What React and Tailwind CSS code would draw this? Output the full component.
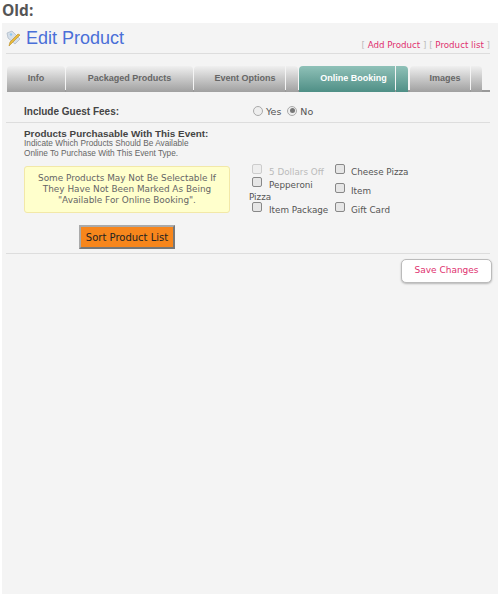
const sans = "font-['Liberation_Sans',Arial,sans-serif]";
const verdana = "font-['DejaVu_Sans',Verdana,sans-serif]";

function Tab({ label, w, ext, active, pad }) {
  const bg = active
    ? "bg-gradient-to-b from-[#8fc1b8] to-[#4f8f86] text-white"
    : "bg-gradient-to-b from-[#f0f0f0] to-[#a0a0a0] text-[#666]";
  return (
    <div className="flex h-[26px]">
      <div className={`${bg} ${w} ${pad || ""} rounded-tl-[4px] ${ext ? "" : "rounded-tr-[4px]"} flex items-center justify-center text-[9px] font-bold whitespace-nowrap`}>
        {label}
      </div>
      {ext && <div className={`${bg} ${ext} ml-px rounded-tr-[4px]`} />}
    </div>
  );
}

function Box({ disabled }) {
  return (
    <span className={`inline-block w-[10px] h-[10px] rounded-[2px] border shrink-0 ${disabled ? "border-[#ccc] bg-[#eee]" : "border-[#888] bg-[#e6e6e6]"}`} />
  );
}

function Check({ label, disabled, h, gap }) {
  return (
    <div className={`flex items-start ${gap || "gap-[6px]"} ${h} text-[8.8px] ${disabled ? "text-[#bbb]" : "text-[#555]"}`}>
      <Box disabled={disabled} />
      <span className="pt-[2px] leading-[12px] whitespace-nowrap">{label}</span>
    </div>
  );
}

function Radio({ on, label }) {
  return (
    <span className="flex items-center gap-[3px]">
      <span className="w-[10px] h-[10px] rounded-full border border-[#aaa] bg-[#eee] flex items-center justify-center">
        {on && <span className="w-[5px] h-[5px] rounded-full bg-[#777]" />}
      </span>
      <span className="pt-[2px]">{label}</span>
    </span>
  );
}

function Icon() {
  return (
    <svg width="16" height="17" viewBox="0 0 16 17" className="shrink-0">
      <path d="M1 3 L6 1 L14 9 L9 14 L2 8 Z" fill="#d5dee8" stroke="#a9b6c4" strokeWidth="0.7" />
      <circle cx="5" cy="4.5" r="1.2" fill="#8fc8ee" />
      <path d="M14 5 L6 13 L3 16 L4 12 L12 4 Z" fill="#e8bb3c" stroke="#b98a20" strokeWidth="0.6" />
    </svg>
  );
}

export default function App() {
  return (
    <div className={`w-[500px] h-[594px] bg-white overflow-hidden ${sans}`}>
      <div className="h-[23px] pl-[2px] text-[15.5px] leading-[20px] font-bold text-[#555] font-['Open_Sans',sans-serif]">Old:</div>
      <div className="ml-[2px] w-[496px] h-[571px] bg-[#f4f4f4]">
        <div className="ml-[4px] w-[484px] h-[31px] border-b border-[#ddd] flex justify-between">
          <div className="flex items-start gap-[4px] pt-[5px]">
            <div className="pt-[2px]"><Icon /></div>
            <span className="text-[18px] leading-[21px] text-[#4a6fd8]">Edit Product</span>
          </div>
          <div className={`text-[8.7px] pt-[16px] text-[#bbb] ${verdana}`}>
            [ <span className="text-[#e0316f]">Add Product</span> ] [ <span className="text-[#e0316f]">Product list</span> ]
          </div>
        </div>
        <div className="ml-[5px] mt-[12px] w-[483px] flex gap-px border-b-2 border-[#999] h-[26px]">
          <Tab label="Info" w="w-[58px]" />
          <Tab label="Packaged Products" w="w-[127px]" />
          <Tab label="Event Options" w="w-[91px]" ext="w-[12px]" pad="pl-[11px]" />
          <Tab label="Online Booking" w="w-[96px]" ext="w-[12px]" pad="pl-[13px]" active />
          <div className="ml-px"><Tab label="Images" w="w-[60px]" ext="w-[11px]" pad="pl-[10px]" /></div>
        </div>
        <div className="ml-[4px] w-[484px] h-[31px] border-b border-[#ddd] flex items-end pb-[1px]">
          <span className="w-[247px] pl-[18px] pb-[2px] text-[10px] font-bold text-[#444] whitespace-nowrap">Include Guest Fees:</span>
          <span className={`flex gap-[6px] pb-[2px] text-[9.5px] text-[#555] ${verdana}`}>
            <Radio label="Yes" />
            <Radio on label="No" />
          </span>
        </div>
        <div className="ml-[4px] w-[484px] h-[131px] border-b border-[#ddd] flex">
          <div className="w-[226px] pl-[18px] pt-[5px]">
            <div className="text-[9.9px] leading-[11px] font-bold text-[#444] whitespace-nowrap">Products Purchasable With This Event:</div>
            <div className="text-[8.25px] leading-[9.5px] text-[#666] whitespace-nowrap">
              Indicate Which Products Should Be Available<br />Online To Purchase With This Event Type.
            </div>
            <div className={`mt-[8px] w-[206px] h-[47px] rounded-[3px] border border-[#f2e8a8] bg-[#ffffcc] flex items-center justify-center text-center text-[8.9px] leading-[11px] text-[#666] ${verdana}`}>
              <span>Some Products May Not Be Selectable If<br />They Have Not Been Marked As Being<br />"Available For Online Booking".</span>
            </div>
            <div className="flex justify-center mt-[12px] pr-[2px]">
              <div className={`w-[96px] h-[24px] bg-[#f7861c] border-2 border-t-[#aaa] border-l-[#aaa] border-r-[#777] border-b-[#777] flex items-center justify-center text-[10px] text-[#222] ${verdana}`}>
                Sort Product List
              </div>
            </div>
          </div>
          <div className={`pt-[41px] flex gap-[6px] ${verdana}`}>
            <div className="w-[97px] pl-[20px]">
              <Check label="5 Dollars Off" disabled h="h-[13px]" gap="gap-[7px]" />
              <Check label="Pepperoni" h="h-[15px]" gap="gap-[7px]" />
              <div className="h-[10px] text-[8.8px] leading-[11px] text-[#555] -ml-[3px]">Pizza</div>
              <Check label="Item Package" h="h-[13px]" gap="gap-[7px]" />
            </div>
            <div>
              <Check label="Cheese Pizza" h="h-[19px]" />
              <Check label="Item" h="h-[19px]" />
              <Check label="Gift Card" h="h-[19px]" />
            </div>
          </div>
        </div>
        <div className="flex justify-end pr-[6px] pt-[5px]">
          <div className={`w-[91px] h-[24px] rounded-[5px] bg-white border border-[#bbb] shadow-[0_1px_2px_rgba(0,0,0,0.25)] flex items-center justify-center text-[9px] text-[#e0316f] ${verdana}`}>
            Save Changes
          </div>
        </div>
      </div>
    </div>
  );
}
